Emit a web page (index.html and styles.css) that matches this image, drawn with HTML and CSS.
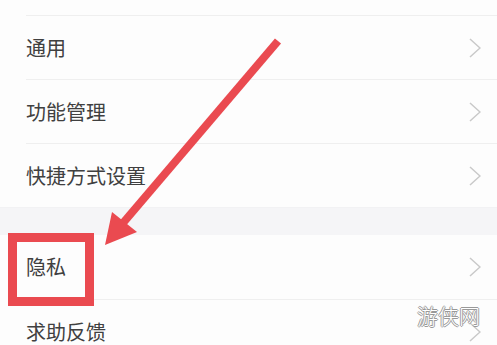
FILE: index.html
```html
<!DOCTYPE html>
<html lang="zh">
<head>
<meta charset="utf-8">
<link rel="stylesheet" href="styles.css">
</head>
<body>
<div class="screen">
  <div class="stub"></div>
  <div class="group">
    <div class="row"><span class="label">通用</span><svg class="chev" viewBox="0 0 12 20"><polyline points="1,1 11,10 1,19"/></svg></div>
    <div class="row"><span class="label">功能管理</span><svg class="chev" viewBox="0 0 12 20"><polyline points="1,1 11,10 1,19"/></svg></div>
    <div class="row"><span class="label">快捷方式设置</span><svg class="chev" viewBox="0 0 12 20"><polyline points="1,1 11,10 1,19"/></svg></div>
  </div>
  <div class="band"></div>
  <div class="group">
    <div class="row first"><span class="label">隐私</span><svg class="chev" viewBox="0 0 12 20"><polyline points="1,1 11,10 1,19"/></svg></div>
    <div class="row"><span class="label">求助反馈</span><svg class="chev" viewBox="0 0 12 20"><polyline points="1,1 11,10 1,19"/></svg></div>
  </div>

  <div class="highlight"></div>
  <svg class="arrow" viewBox="0 0 497 345">
    <line x1="278" y1="41" x2="123" y2="223"/>
    <polygon points="112,212 137,232 105,245"/>
  </svg>
  <div class="watermark">游侠网</div>
</div>
</body>
</html>
```
FILE: styles.css
```css
html, body {
  margin: 0;
  padding: 0;
  background: #fdfdfd;
}
.screen {
  position: relative;
  width: 497px;
  height: 345px;
  overflow: hidden;
  font-family: "Noto Sans CJK SC", "Noto Sans", sans-serif;
}
.stub {
  height: 15px;
}
.group {
  display: flex;
  flex-direction: column;
}
.row {
  height: 63px;
  margin-left: 26px;
  padding-right: 16px;
  border-top: 1px solid #efefef;
  display: flex;
  align-items: center;
  justify-content: space-between;
}
.row.first {
  border-top: none;
  height: 64px;
}
.label {
  font-size: 20px;
  color: #404040;
  line-height: 1;
}
.chev {
  width: 12px;
  height: 20px;
}
.chev polyline {
  fill: none;
  stroke: #c9c9c9;
  stroke-width: 1.5;
}
.band {
  height: 28px;
  background: #f5f5f7;
  border-top: 1px solid #f2f2f4;
  box-sizing: border-box;
}
.highlight {
  position: absolute;
  left: 8px;
  top: 233px;
  width: 86px;
  height: 73px;
  box-sizing: border-box;
  border: 9px solid #ea4a50;
}
.arrow {
  position: absolute;
  left: 0;
  top: 0;
  width: 497px;
  height: 345px;
}
.arrow line {
  stroke: #ea4a50;
  stroke-width: 8;
}
.arrow polygon {
  fill: #ea4a50;
}
.watermark {
  position: absolute;
  left: 417px;
  top: 300px;
  font-size: 21px;
  font-weight: 300;
  color: #ffffff;
  text-shadow: 1px 0 #999, -1px 0 #999, 0 1px #999, 0 -1px #999;
  line-height: 1.5;
}
```
